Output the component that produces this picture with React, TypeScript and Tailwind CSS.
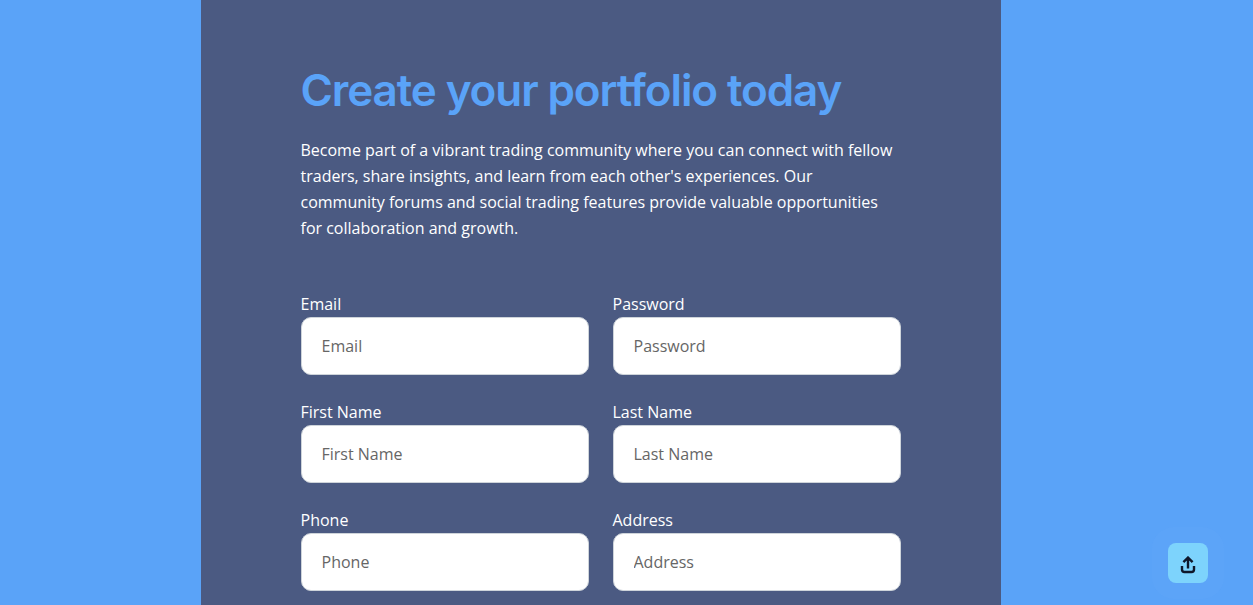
const fields = [
  ["Email", "Password"],
  ["First Name", "Last Name"],
  ["Phone", "Address"],
];

function Field({ label }: { label: string }) {
  return (
    <label className="block w-[288px]">
      <span className="block text-[16px] leading-[26px] text-white">{label}</span>
      <input
        placeholder={label}
        className="block h-[58px] w-full rounded-[10px] border border-[#ced4da] bg-white px-5 text-[16px] text-[#212529] outline-none placeholder:text-[#666666]"
      />
    </label>
  );
}

export default function App() {
  return (
    <div className="relative h-screen overflow-hidden bg-[#5aa3f8] font-['Open_Sans',sans-serif]">
      <div className="ml-[200.5px] h-full w-[800px] bg-[#4b5a82] px-[100px] pt-[60px]">
        <h1 className="font-['Inter',sans-serif] text-[44px] font-semibold leading-[60px] tracking-[-1.1px] text-[#5aa3f8]">
          Create your portfolio today
        </h1>
        <p className="mt-[17px] w-[600px] text-[16px] leading-[26px] text-white">
          Become part of a vibrant trading community where you can connect with fellow traders, share insights, and learn from each other's experiences. Our community forums and social trading features provide valuable opportunities for collaboration and growth.
        </p>
        <form className="mt-[50px] grid grid-cols-[288px_288px] gap-x-6 gap-y-6">
          {fields.flat().map((label) => (
            <Field key={label} label={label} />
          ))}
        </form>
      </div>
      <button className="absolute bottom-[22px] left-[1168px] flex h-10 w-10 items-center justify-center rounded-lg bg-[#7dd3fc] pt-1 text-[#0f172a] shadow-[0_0_0_16px_rgba(96,165,250,0.35)]">
        <svg width="16" height="18" viewBox="0 0 16 18" fill="none" stroke="currentColor" strokeWidth="2.4">
          <path d="M8 12.5V1.8M3.4 6.2 8 1.6l4.6 4.6" />
          <path d="M2 10v3.5A2.5 2.5 0 0 0 4.5 16h7a2.5 2.5 0 0 0 2.5-2.5V10" />
        </svg>
      </button>
    </div>
  );
}
